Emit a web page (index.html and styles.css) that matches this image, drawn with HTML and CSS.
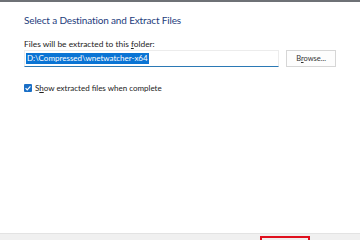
FILE: index.html
```html
<!DOCTYPE html>
<html lang="en">

<head>
  <meta charset="UTF-8">
  <title>Extract Compressed Folders</title>
  <link rel="stylesheet" href="styles.css">
</head>

<body>

  <div class="dialog">
    <div class="content">
      <h1 class="title">Select a Destination and Extract Files</h1>

      <label class="field-label" for="dest">Files will be extracted to this <u>f</u>older:</label>
      <div class="dest-row">
        <div class="dest-input" id="dest"><span class="selected">D:\Compressed\wnetwatcher-x64</span></div>
        <button class="browse">B<u>r</u>owse...</button>
      </div>

      <div class="check-row">
        <span class="checkbox">
          <svg width="8" height="8" viewBox="0 0 8 8"><path d="M1.6 4.2 L3.2 5.8 L6.4 2.4" fill="none" stroke="#fff" stroke-width="1.2"/></svg>
        </span>
        <span class="check-label">S<u>h</u>ow extracted files when complete</span>
      </div>
    </div>

    <div class="footer">
      <div class="highlight"></div>
    </div>
  </div>

</body>
</html>
```

FILE: styles.css
```css
html, body { margin: 0; padding: 0; }
body { width: 360px; height: 240px; overflow: hidden; background: #fff; font-family: Lato, "Noto Sans", sans-serif; }
.dialog { height: 240px; display: flex; flex-direction: column; border-top: 2px solid #6e7176; box-sizing: border-box; }
.content { flex: 1; padding: 11px 24px 0 24px; }
.title { margin: 0; font-size: 10px; letter-spacing: -0.15px; font-weight: normal; color: #1d3c7c; line-height: 14px; }
.field-label { display: block; margin-top: 12px; font-size: 8.4px; color: #222; line-height: 10px; }
.field-label u, .check-label u { text-decoration-thickness: 1px; }
.dest-row { display: flex; gap: 7px; margin-top: 1px; align-items: flex-start; }
.dest-input { width: 253px; height: 13px; border: 1px solid #ececec; border-bottom: 1px solid #2b79b5; padding: 1px 1px; display: flex; align-items: center; }
.selected { background: #0a74d4; color: #fff; font-size: 8px; line-height: 11px; padding: 0 1px; }
.browse { width: 50px; height: 17px; border: 1px solid #d6d6d6; background: #fdfdfd; font-family: inherit; font-size: 7.5px; color: #333; padding: 0; }
.check-row { display: flex; align-items: center; gap: 3px; margin-top: 16px; }
.checkbox { width: 8px; height: 8px; background: #1a6fc6; border-radius: 1px; display: flex; }
.check-label { font-size: 8px; color: #222; line-height: 10px; }
.footer { height: 6px; background: #f0f0f0; border-top: 1px solid #e3e3e3; position: relative; }
.highlight { position: absolute; left: 260px; top: 2px; width: 46px; height: 6px; border: 2px solid #e0101e; border-bottom: none; }
```
